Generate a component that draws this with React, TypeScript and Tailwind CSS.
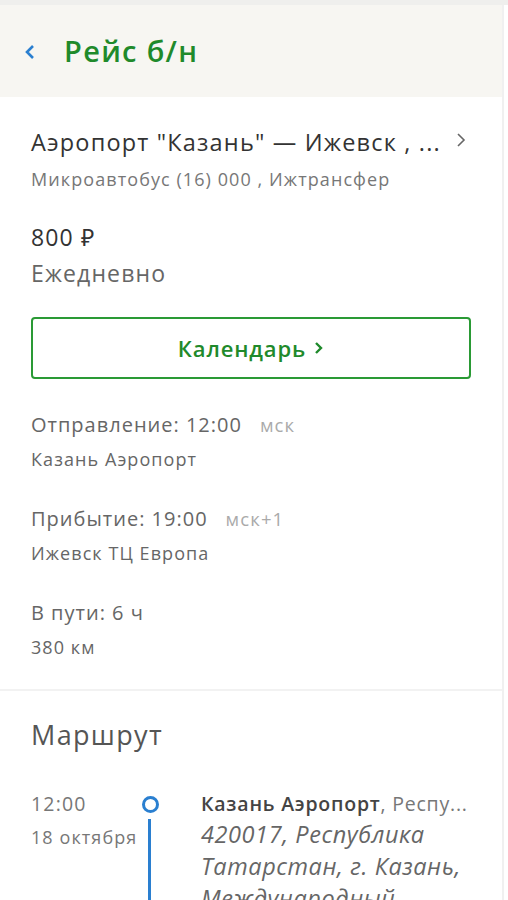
import React from "react"

const font = { fontFamily: '"Open Sans", "Noto Sans", sans-serif' }

function Header() {
  return (
    <div className="h-[92px] bg-[#f7f6f2] flex items-center px-[23px] gap-[27px]">
      <svg width="14" height="20" viewBox="0 0 14 20" className="mt-[2px]">
        <path d="M10 4 L4 10 L10 16" fill="none" stroke="#2a7fd0" strokeWidth="2.6" />
      </svg>
      <h1 className="text-[29px] font-semibold text-[#1f8a2b] tracking-[0.045em]">Рейс б/н</h1>
    </div>
  )
}

function Info({ label, zone, place }: { label: string; zone?: string; place: string }) {
  return (
    <div className="flex flex-col">
      <div className="flex items-baseline gap-[18px] leading-[26px]">
        <span className="text-[20px] text-[#666] tracking-[0.05em]">{label}</span>
        {zone && <span className="text-[18.5px] text-[#aaa] tracking-[0.06em]">{zone}</span>}
      </div>
      <span className="text-[18px] text-[#666] mt-[9px] leading-[24px] tracking-[0.06em]">{place}</span>
    </div>
  )
}

function Trip() {
  return (
    <div className="px-[31px] pt-[30px] pb-[30px] border-b-2 border-[#f2f2f2]">
      <div className="flex items-start justify-between">
        <div className="text-[23.5px] text-[#333] leading-[30px] tracking-[0.05em] whitespace-nowrap">
          Аэропорт "Казань" — Ижевск , ...
        </div>
        <svg width="12" height="16" viewBox="0 0 12 16" className="mt-[5px] mr-[4px]">
          <path d="M3 2 L9 8 L3 14" fill="none" stroke="#666" strokeWidth="1.6" />
        </svg>
      </div>
      <div className="text-[18px] text-[#777] mt-[10px] tracking-[0.06em] leading-[24px]">
        Микроавтобус (16) 000 , Ижтрансфер
      </div>

      <div className="text-[23px] text-[#333] mt-[31px] leading-[30px] tracking-[0.05em]">800 ₽</div>
      <div className="text-[23px] text-[#666] mt-[6px] leading-[30px] tracking-[0.05em]">Ежедневно</div>

      <button className="w-full h-[62px] mt-[29px] border-2 border-[#2a9a35] rounded-[4px] text-[22px] font-semibold text-[#1f8a2b] tracking-[0.04em] flex items-center justify-center gap-[8px]">
        Календарь
        <svg width="10" height="14" viewBox="0 0 10 14">
          <path d="M2 2 L7 7 L2 12" fill="none" stroke="#1f8a2b" strokeWidth="2.4" />
        </svg>
      </button>

      <div className="flex flex-col gap-[35px] mt-[33px]">
        <Info label="Отправление: 12:00" zone="мск" place="Казань Аэропорт" />
        <Info label="Прибытие: 19:00" zone="мск+1" place="Ижевск ТЦ Европа" />
        <Info label="В пути: 6 ч" place="380 км" />
      </div>
    </div>
  )
}

function Route() {
  return (
    <div className="px-[31px] pt-[24px]">
      <h2 className="text-[27px] text-[#555] tracking-[0.05em]">Маршрут</h2>
      <div className="flex mt-[36px]">
        <div className="w-[100px] flex flex-col whitespace-nowrap">
          <span className="text-[19.5px] text-[#777] leading-[24px] tracking-[0.06em]">12:00</span>
          <span className="text-[18px] text-[#777] mt-[8px] tracking-[0.06em]">18 октября</span>
        </div>
        <div className="w-[38px] flex flex-col items-center pt-[4px]">
          <div className="w-[17px] h-[17px] rounded-full border-[3.5px] border-[#2a7fd0]" />
          <div className="w-[3px] h-[90px] bg-[#2a7fd0] mt-[6px] -ml-[2px]" />
        </div>
        <div className="flex-1 flex flex-col ml-[32px]">
          <div className="text-[19.5px] leading-[24px] text-[#777] whitespace-nowrap tracking-[0.04em]">
            <span className="font-semibold text-[#444]">Казань Аэропорт</span>, Респу...
          </div>
          <div className="text-[23.5px] italic text-[#666] leading-[32px] mt-[2px] tracking-[0.025em]">
            420017, Республика Татарстан, г. Казань, Международный аэропорт
          </div>
        </div>
      </div>
    </div>
  )
}

export default function App() {
  return (
    <div style={font} className="w-[508px] h-[900px] overflow-hidden bg-white">
      <div className="h-[5px] bg-[#efefed]" />
      <div className="w-[504px] border-r-2 border-[#f0f0f0] min-h-[895px]">
        <Header />
        <Trip />
        <Route />
      </div>
    </div>
  )
}
